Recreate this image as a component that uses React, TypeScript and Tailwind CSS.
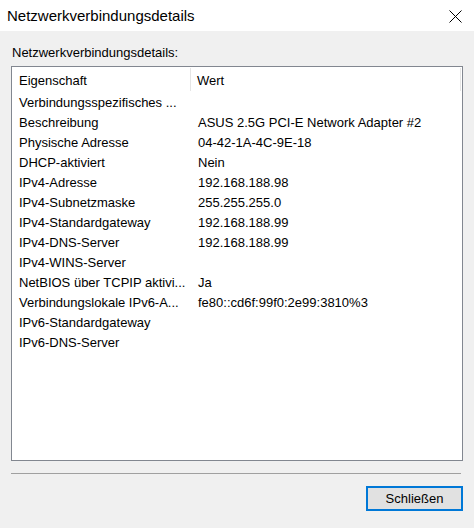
import React from 'react';

const rows: [string, string][] = [
  ['Verbindungsspezifisches ...', ''],
  ['Beschreibung', 'ASUS 2.5G PCI-E Network Adapter #2'],
  ['Physische Adresse', '04-42-1A-4C-9E-18'],
  ['DHCP-aktiviert', 'Nein'],
  ['IPv4-Adresse', '192.168.188.98'],
  ['IPv4-Subnetzmaske', '255.255.255.0'],
  ['IPv4-Standardgateway', '192.168.188.99'],
  ['IPv4-DNS-Server', '192.168.188.99'],
  ['IPv4-WINS-Server', ''],
  ['NetBIOS über TCPIP aktivi...', 'Ja'],
  ['Verbindungslokale IPv6-A...', 'fe80::cd6f:99f0:2e99:3810%3'],
  ['IPv6-Standardgateway', ''],
  ['IPv6-DNS-Server', ''],
];

export default function App() {
  return (
    <div className="w-[474px] h-[528px] bg-[#f0f0f0] flex flex-col text-black font-['Liberation_Sans',Arial,sans-serif] overflow-hidden">
      {/* title bar */}
      <div className="h-[31px] bg-white flex items-center justify-between pl-[7px] pr-[12px] shrink-0">
        <span className="text-[15px] leading-none">Netzwerkverbindungsdetails</span>
        <svg width="13" height="13" viewBox="0 0 13 13" className="mt-[1px]">
          <path d="M0.5 0.5 L12.5 12.5 M12.5 0.5 L0.5 12.5" stroke="#000" strokeWidth="1" fill="none" />
        </svg>
      </div>

      <div className="flex-1 flex flex-col px-[11px]">
        <div className="h-[35px] flex items-end pb-[7px] pl-[1px] text-[13px] leading-none">
          Netzwerkverbindungsdetails:
        </div>

        <div className="h-[395px] border border-[#828790] bg-white text-[13px] leading-none">
          <div className="flex h-[25px]">
            <div className="w-[179px] flex items-center pl-[7px] pt-[1px] border-r border-[#e5e5e5] my-[1px]">Eigenschaft</div>
            <div className="w-[270px] flex items-center pl-[6px] pt-[1px] border-r border-[#e5e5e5] my-[1px]">Wert</div>
          </div>
          {rows.map(([k, v]) => (
            <div key={k} className="flex h-[20px] items-center pt-[1px]">
              <div className="w-[179px] pl-[7px] whitespace-nowrap">{k}</div>
              <div className="pl-[7px] whitespace-nowrap">{v}</div>
            </div>
          ))}
        </div>

        <div className="mt-[12px] h-px bg-[#a0a0a0] w-[450px]" />

        <div className="flex justify-end mt-[12px]">
          <button className="w-[97px] h-[25px] border-2 border-[#0078d7] bg-[#e1e1e1] text-[13px] leading-none flex items-center justify-center">
            Schließen
          </button>
        </div>
      </div>
    </div>
  );
}
